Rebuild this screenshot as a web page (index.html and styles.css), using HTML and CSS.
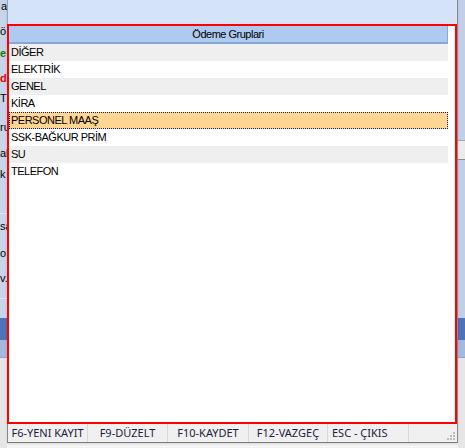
FILE: index.html
```html
<!DOCTYPE html>
<html lang="tr">
<head>
<meta charset="utf-8">
<title>Ödeme Gruplari</title>
<link rel="stylesheet" href="styles.css">
</head>
<body>
<div class="screen">
  <div class="bg-left">
    <div class="bl bl-a">a</div>
    <div class="bl bl-o">ö</div>
    <div class="bl bl-e green">e</div>
    <div class="bl bl-d red">d</div>
    <div class="bl bl-t">Tü</div>
    <div class="bl bl-r">ru</div>
    <div class="bl bl-l">al</div>
    <div class="bl bl-k">k I</div>
    <div class="hline hl1"></div>
    <div class="bl bl-s">sa</div>
    <div class="bl bl-o2">o</div>
    <div class="bl bl-v">v.</div>
    <div class="hline hl2"></div>
    <div class="band-dark bd-l"></div>
    <div class="band-light"></div>
    <div class="band-line"></div>
    <div class="band-gray"></div>
  </div>
  <div class="bg-mid"></div>
  <div class="bg-right">
    <div class="r-bar"></div>
    <div class="band-dark bd-r"></div>
    <div class="band-light"></div>
    <div class="band-line"></div>
    <div class="band-gray"></div>
  </div>

  <div class="dialog">
    <div class="dlg-top"></div>
    <div class="redbox">
      <div class="grid">
        <div class="grid-head">Ödeme Gruplari</div>
        <div class="row alt">DİĞER</div>
        <div class="row">ELEKTRİK</div>
        <div class="row alt">GENEL</div>
        <div class="row">KİRA</div>
        <div class="row selected">PERSONEL MAAŞ</div>
        <div class="row">SSK-BAĞKUR PRİM</div>
        <div class="row alt">SU</div>
        <div class="row">TELEFON</div>
      </div>
    </div>
    <div class="status">
      <div class="panel p1">F6-YENI KAYIT</div>
      <div class="panel p2">F9-DÜZELT</div>
      <div class="panel p3">F10-KAYDET</div>
      <div class="panel p4">F12-VAZGEÇ</div>
      <div class="panel p5">ESC - ÇIKIS</div>
      <div class="panel p6"></div>
      <svg class="grip" width="8" height="8" viewBox="0 0 8 8">
        <rect x="6" y="0" width="2" height="2" fill="#bcbcbc"/>
        <rect x="3" y="3" width="2" height="2" fill="#bcbcbc"/>
        <rect x="6" y="3" width="2" height="2" fill="#bcbcbc"/>
        <rect x="0" y="6" width="2" height="2" fill="#bcbcbc"/>
        <rect x="3" y="6" width="2" height="2" fill="#bcbcbc"/>
        <rect x="6" y="6" width="2" height="2" fill="#bcbcbc"/>
      </svg>
    </div>
  </div>
</div>
</body>
</html>
```

FILE: styles.css
```css
* { box-sizing: border-box; }
html, body { margin: 0; padding: 0; }
body {
  width: 465px;
  height: 448px;
  overflow: hidden;
  background: #f4f4f4;
  font-family: "Liberation Sans", Arial, sans-serif;
  font-size: 11px;
  color: #000;
}

.screen {
  position: relative;
  width: 465px;
  height: 448px;
  display: flex;
}

/* background application (behind dialog) */
.bg-left {
  width: 7px;
  height: 448px;
  overflow: hidden;
  background: #c8d4e9;
  display: flex;
  flex-direction: column;
  white-space: nowrap;
}
.bl {
  height: 16px;
  line-height: 16px;
  flex: none;
}
.bl-a { height: 12px; line-height: 12px; padding-left: 1px; }
.bl-o { margin-top: 11px; }
.bl-e { margin-top: 6px; }
.bl-d { margin-top: 9px; }
.bl-t { margin-top: 4px; }
.bl-r { margin-top: 13px; }
.bl-l { margin-top: 10px; }
.bl-k { margin-top: 5px; }
.bl-s { margin-top: 4px; }
.bl-o2 { margin-top: 11px; }
.bl-v { margin-top: 9px; }
.green { color: #008000; font-weight: bold; }
.red { color: #e00000; font-weight: bold; }

.hline { height: 1px; flex: none; background: #e2e6ee; }
.hl1 { margin-top: 31px; }
.hl2 { margin-top: 12px; }

.band-dark { height: 22px; flex: none; background: #4d73b8; }
.bd-l { margin-top: 19px; }
.bd-r { margin-top: 158px; }
.band-light { height: 17px; flex: none; background: #a4b9dd; }
.band-line { height: 1px; flex: none; background: #8ea4c8; }
.band-gray { flex: 1; background: #e6e6e6; }

.bg-mid { flex: 1; background: #f4f4f4; }

.bg-right {
  width: 7px;
  height: 448px;
  background: #c2d0e7;
  display: flex;
  flex-direction: column;
}
.r-bar {
  margin-top: 140px;
  height: 20px;
  flex: none;
  background: #ebebeb;
  border-top: 1px solid #a8a8a8;
  border-bottom: 1px solid #8c8c8c;
}

/* dialog window */
.dialog {
  position: absolute;
  left: 7px;
  top: 0;
  width: 451px;
  height: 443px;
  display: flex;
  flex-direction: column;
  border-right: 1px solid #8a8a8a;
  box-shadow: 0 1px 2px rgba(0, 0, 0, 0.12);
  background: #f0f0f0;
}
.dlg-top {
  height: 24px;
  flex: none;
  background: #d5e3f9;
  border-left: 1px solid #98a4b8;
}
.redbox {
  height: 400px;
  flex: none;
  border: 2px solid #ff0000;
  background: #ffffff;
}
.grid {
  height: 100%;
  padding-right: 7px;
  background: #ffffff;
}
.grid-head {
  height: 18px;
  line-height: 16px;
  text-align: center;
  letter-spacing: -0.5px;
  background: #aecaf0;
  border-bottom: 2px solid #86a6da;
  border-right: 1px solid #8aa8d8;
}
.row {
  height: 17px;
  line-height: 17px;
  padding-left: 2px;
  letter-spacing: -0.5px;
  white-space: nowrap;
  background: #ffffff;
}
.row.alt { background: #efefef; }
.row.selected {
  background: #ffd592;
  border: 1px dotted #0a246a;
  line-height: 15px;
  padding-left: 1px;
}

/* status bar */
.status {
  height: 19px;
  flex: none;
  display: flex;
  align-items: stretch;
  background: #f0f0f0;
  border-left: 1px solid #8a8a8a;
  border-bottom: 1px solid #7a7a7a;
  font-family: "Noto Sans", "Open Sans", sans-serif;
  font-size: 11px;
  line-height: 18px;
  color: #1c1c40;
  position: relative;
  white-space: nowrap;
}
.panel {
  flex: none;
  border-right: 1px solid #d9d9d9;
  text-align: center;
  overflow: hidden;
}
.p1 { width: 80px; }
.p2 { width: 80px; }
.p3 { width: 81px; }
.p4 { width: 79px; }
.p5 { width: 81px; text-align: left; padding-left: 4px; }
.p6 { flex: 1; border-right: none; }
.grip {
  position: absolute;
  right: 2px;
  bottom: 2px;
}
```
